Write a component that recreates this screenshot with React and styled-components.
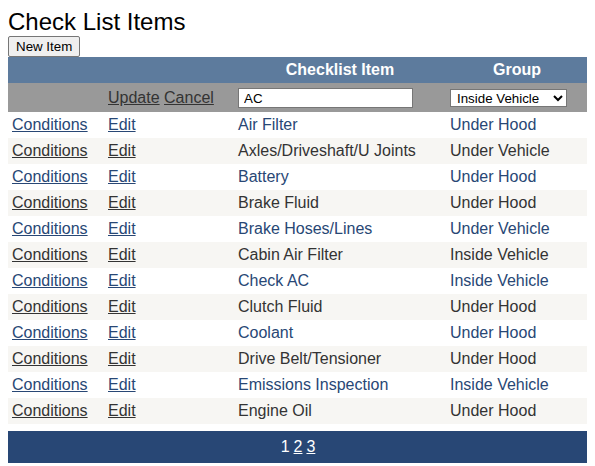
import React from "react";
import styled, { createGlobalStyle } from "styled-components";

const Global = createGlobalStyle`
  html, body { background: #fff; }
  body { margin: 8px; font-family: "Liberation Sans", Arial, sans-serif; color: #000; }
`;

const Title = styled.div`
  font-size: 24px;
  line-height: 28px;
`;

const Button = styled.button`
  display: block;
  font-family: "Liberation Sans", Arial, sans-serif;
  font-size: 13.33px;
  height: 21px;
  padding: 1px 7px;
  background: #efefef;
  border: 1px solid #767676;
  border-radius: 2px;
  color: #000;
`;

const Table = styled.table`
  width: 580px;
  border-collapse: collapse;
  border-spacing: 0;
  font-size: 16px;
  table-layout: fixed;
`;

const Th = styled.th`
  background: #5d7b9d;
  color: #fff;
  font-weight: bold;
  height: 26px;
  padding: 0 4px;
  text-align: center;
  box-sizing: border-box;
`;

const Row = styled.tr`
  background: ${(p) => (p.$alt ? "#f7f6f3" : "#ffffff")};
  color: ${(p) => (p.$alt ? "#333333" : "#284775")};
`;

const EditRow = styled.tr`
  background: #999999;
  color: #333333;
`;

const Td = styled.td`
  height: 26px;
  padding: 0 4px;
  line-height: 18px;
  box-sizing: border-box;
  white-space: nowrap;
`;

const EditTd = styled(Td)`
  height: 29px;
  padding-top: 1px;
`;

const Link = styled.a`
  color: inherit;
  text-decoration: underline;
  cursor: pointer;
`;

const TextInput = styled.input`
  box-sizing: border-box;
  width: 175px;
  height: 20px;
  border: 1px solid #767676;
  padding: 1px 5px;
  font-family: "Liberation Sans", Arial, sans-serif;
  font-size: 13.33px;
  color: #000;
  background: #fff;
  vertical-align: middle;
`;

const Select = styled.select`
  box-sizing: border-box;
  width: 117px;
  height: 18px;
  border: 1px solid #767676;
  padding: 0 2px;
  font-family: "Liberation Sans", Arial, sans-serif;
  font-size: 13.33px;
  color: #000;
  background: #fff;
  vertical-align: middle;
`;

const Pager = styled.div`
  width: 580px;
  height: 32px;
  margin-top: 7px;
  background: #284775;
  color: #fff;
  font-size: 16px;
  display: flex;
  align-items: center;
  justify-content: center;
  gap: 4px;
`;

const PageLink = styled.a`
  color: #fff;
  text-decoration: underline;
`;

const items = [
  ["Air Filter", "Under Hood"],
  ["Axles/Driveshaft/U Joints", "Under Vehicle"],
  ["Battery", "Under Hood"],
  ["Brake Fluid", "Under Hood"],
  ["Brake Hoses/Lines", "Under Vehicle"],
  ["Cabin Air Filter", "Inside Vehicle"],
  ["Check AC", "Inside Vehicle"],
  ["Clutch Fluid", "Under Hood"],
  ["Coolant", "Under Hood"],
  ["Drive Belt/Tensioner", "Under Hood"],
  ["Emissions Inspection", "Inside Vehicle"],
  ["Engine Oil", "Under Hood"],
];

export default function App() {
  return (
    <>
      <Global />
      <Title>Check List Items</Title>
      <Button>New Item</Button>
      <Table>
        <colgroup>
          <col style={{ width: 96 }} />
          <col style={{ width: 130 }} />
          <col style={{ width: 212 }} />
          <col style={{ width: 142 }} />
        </colgroup>
        <thead>
          <tr>
            <Th />
            <Th />
            <Th>Checklist Item</Th>
            <Th>Group</Th>
          </tr>
        </thead>
        <tbody>
          <EditRow>
            <EditTd />
            <EditTd>
              <Link>Update</Link> <Link>Cancel</Link>
            </EditTd>
            <EditTd>
              <TextInput defaultValue="AC" />
            </EditTd>
            <EditTd>
              <Select defaultValue="Inside Vehicle">
                <option>Inside Vehicle</option>
                <option>Under Hood</option>
                <option>Under Vehicle</option>
              </Select>
            </EditTd>
          </EditRow>
          {items.map(([name, group], i) => (
            <Row key={name} $alt={i % 2 === 1}>
              <Td>
                <Link>Conditions</Link>
              </Td>
              <Td>
                <Link>Edit</Link>
              </Td>
              <Td>{name}</Td>
              <Td>{group}</Td>
            </Row>
          ))}
        </tbody>
      </Table>
      <Pager>
        <span>1</span>
        <PageLink>2</PageLink>
        <PageLink>3</PageLink>
      </Pager>
    </>
  );
}
